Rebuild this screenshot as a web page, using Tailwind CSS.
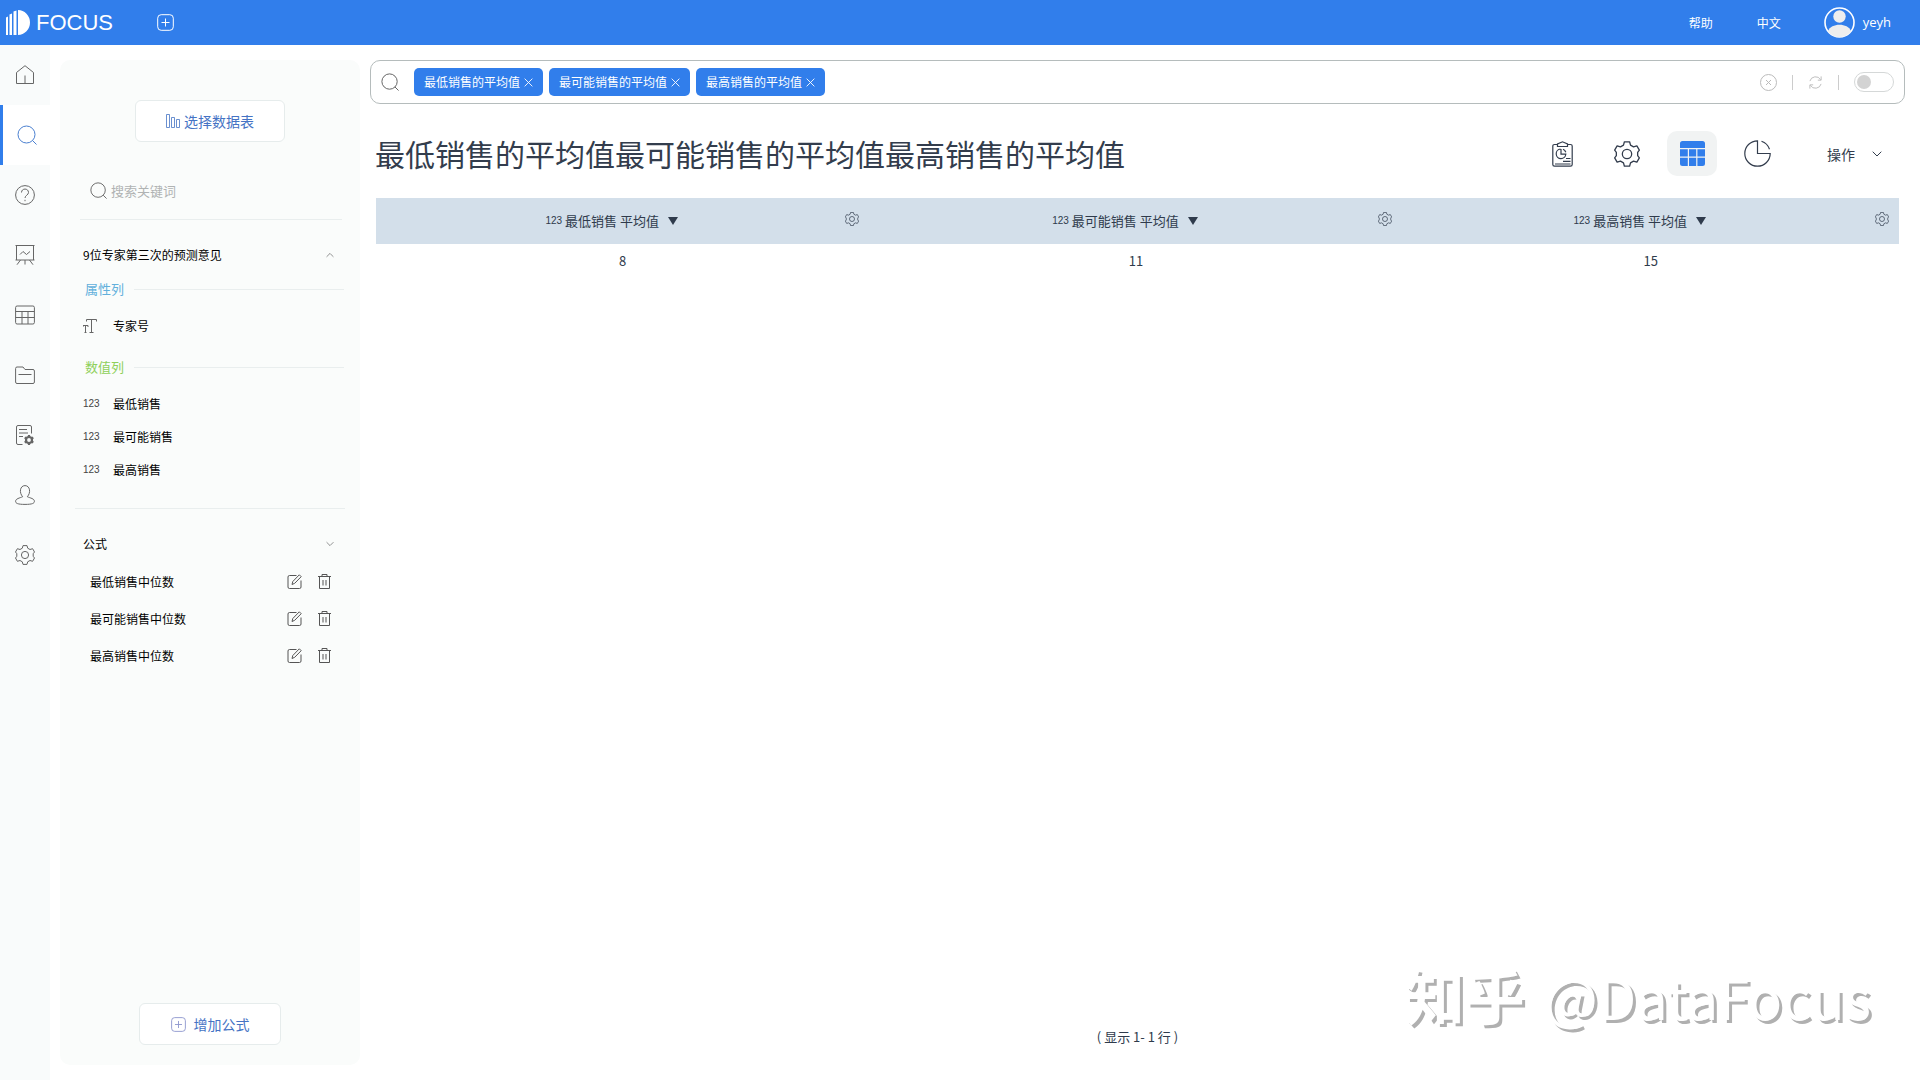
<!DOCTYPE html>
<html lang="zh-CN">
<head>
<meta charset="utf-8">
<meta name="viewport" content="width=device-width, initial-scale=1">
<title>FOCUS</title>
<script src="https://cdn.jsdelivr.net/npm/@tailwindcss/browser@4"></script>
</head>
<body class="flex min-h-screen flex-col bg-white font-['Noto_Sans_CJK_SC',sans-serif] text-xs text-black">

<!-- Shared icons -->
<svg class="hidden" aria-hidden="true">
  <symbol id="i-search" viewBox="0 0 20 20" fill="none" stroke="currentColor"><circle cx="9.500" cy="9.500" r="8.500"/><path d="M15.500 15.500l4 4"/></symbol>
  <symbol id="i-gear" viewBox="0 0 20 20" fill="none" stroke="currentColor" stroke-linejoin="round"><path d="M8 .6h4l.7 2.600 2.300 1.300 2.600-.8 1.900 3.300-1.300 1.700v2.600l1.300 1.700-1.900 3.300-2.600-.8-2.300 1.300-.7 2.600H8l-.7-2.600L5 15.500l-2.600.8L.5 13l1.300-1.700V8.700L.5 7l1.900-3.300 2.600.8 2.300-1.300z"/><circle cx="10" cy="10" r="3.600"/></symbol>
  <symbol id="i-plus" viewBox="0 0 17 17" fill="none" stroke="currentColor"><rect x=".7" y=".7" width="15.600" height="15.600" rx="3.500"/><path d="M8.500 4.500v8M4.500 8.500h8"/></symbol>
  <symbol id="i-x" viewBox="0 0 10 10" fill="none" stroke="currentColor"><path d="M.7.7l8.600 8.600M9.300.7L.7 9.300"/></symbol>
  <symbol id="i-down" viewBox="0 0 10 6" fill="none" stroke="currentColor"><path d="M.7.7L5 5 9.300.7"/></symbol>
  <symbol id="i-caret" viewBox="0 0 10 8" fill="currentColor"><path d="M0 0h10L5 8z"/></symbol>
  <symbol id="i-edit" viewBox="0 0 15 15" fill="none" stroke="currentColor"><path d="M9.500 1.500H2.500a1.500 1.500 0 0 0-1.500 1.500v10a1.500 1.500 0 0 0 1.500 1.500h10a1.500 1.500 0 0 0 1.500-1.500V6.500"/><path d="M5 10.500l.8-3L12.300.8l1.900 1.900-6.500 6.600z" stroke-linejoin="round"/></symbol>
  <symbol id="i-trash" viewBox="0 0 13 15" fill="none" stroke="currentColor"><path d="M0 2.500h13M4 2.500v-2h5v2M1.500 2.500v12h10v-12M5 6v5.500M8 6v5.500"/></symbol>
</svg>

<header class="flex h-[45px] items-center bg-[#317eeb] pr-[29px] pl-1.5 text-white">
  <a href="#" class="flex items-center gap-1.5" aria-label="FOCUS">
    <svg class="h-[25px] w-6" viewBox="0 0 24 25" fill="currentColor" aria-hidden="true"><path d="M0 7.500l2-1V25H0zM3.500 4.500l2.500-1V25H3.500zM7.500 1.500l3-1V25h-3zM12 0a12 12.500 0 0 1 0 25z"/></svg>
    <span class="font-['Liberation_Sans',sans-serif] text-[22px] leading-7">FOCUS</span>
  </a>
  <button type="button" class="ml-11" aria-label="新建"><svg class="size-[17px]"><use href="#i-plus"/></svg></button>
  <nav class="ml-auto flex items-center">
    <a href="#" class="mr-11">帮助</a>
    <a href="#" class="mr-[43px]">中文</a>
    <a href="#" class="flex items-center gap-2">
      <svg class="size-[31px]" viewBox="0 0 31 31" aria-hidden="true"><circle cx="15.500" cy="15.500" r="14.500" fill="none" stroke="#fff" stroke-width="1.600"/><circle cx="15.500" cy="9.500" r="6.200" fill="#eee"/><path d="M4 24c3-8.500 20-8.500 23 0a14 14 0 0 1-23 0z" fill="#eee"/></svg>
      <span class="font-['Open_Sans',sans-serif] text-[13px]">yeyh</span>
    </a>
  </nav>
</header>

<div class="flex grow">
  <!-- Icon rail -->
  <nav class="w-[50px] shrink-0 bg-[#f9fbfb] text-[#666]">
    <a href="#" aria-label="首页" class="flex h-15 items-center justify-center"><svg class="size-5" viewBox="0 0 20 20" fill="none" stroke="currentColor"><path d="M1.500 18.500V7.500L10 .7l8.500 6.800v11zM10 18.500v-8"/></svg></a>
    <a href="#" aria-label="搜索" class="flex h-15 items-center justify-center border-l-3 border-[#317eeb] bg-white text-[#4a7fd0]"><svg class="size-5"><use href="#i-search"/></svg></a>
    <a href="#" aria-label="帮助" class="flex h-15 items-center justify-center"><svg class="size-5" viewBox="0 0 20 20" fill="none" stroke="currentColor"><circle cx="10" cy="10" r="9.400"/><path d="M6.500 7.500c0-4.600 7-4.600 7 0 0 2.600-3.500 2.800-3.500 5.500M10 14.800v1.400"/></svg></a>
    <a href="#" aria-label="看板" class="flex h-15 items-center justify-center"><svg class="size-5" viewBox="0 0 20 20" fill="none" stroke="currentColor"><path d="M.5.5h19M1.500.5v14.500M18.500.5v14.500M.5 15h19M5.500 15L2 19.700M14.500 15l3.500 4.700M10 15v4.500M5 9.500l3-3 3.500 3L15 6.500"/></svg></a>
    <a href="#" aria-label="数据表" class="flex h-15 items-center justify-center"><svg class="size-5" viewBox="0 0 20 20" fill="none" stroke="currentColor"><rect x=".6" y="1" width="18.800" height="18" rx="1.500"/><path d="M.6 6.500h18.800M.6 12.500h18.800M7 6.500V19M13 6.500V19"/></svg></a>
    <a href="#" aria-label="文件夹" class="flex h-15 items-center justify-center"><svg class="size-5" viewBox="0 0 20 20" fill="none" stroke="currentColor"><path d="M.6 17V3.500Q.6 2 2 2h6l2 2.500h8q1.400 0 1.400 1.500v11q0 1.500-1.400 1.500H2Q.6 18.500.6 17zM3.500 9.500h13"/></svg></a>
    <a href="#" aria-label="任务" class="flex h-15 items-center justify-center"><svg class="size-5" viewBox="0 0 20 20" fill="none" stroke="currentColor"><path d="M7.500 19.500H3q-1.500 0-1.500-1.500V2Q1.500.5 3 .5h12q1.500 0 1.500 1.500v6.500M4 4.500h8M4 8h9M4 11.500h4"/><circle cx="14" cy="15" r="3" stroke-width="2.200"/><path d="M14 10v1.800M14 18.200V20M9.700 12.500l1.500.9M16.800 16.600l1.500.9M18.300 12.500l-1.500.9M11.200 16.600l-1.500.9" stroke-width="2.200"/></svg></a>
    <a href="#" aria-label="用户" class="flex h-15 items-center justify-center"><svg class="size-5" viewBox="0 0 20 20" fill="none" stroke="currentColor"><path d="M7.700 11.700C4 8 4.800.6 10 .6s6 7.400 2.300 11.100c3 1.400 7.100 1.900 7.100 4.600 0 2-2 3.100-9.400 3.100S.6 18.300.6 16.300c0-2.700 4.100-3.200 7.100-4.600z"/></svg></a>
    <a href="#" aria-label="设置" class="flex h-15 items-center justify-center"><svg class="size-5"><use href="#i-gear"/></svg></a>
  </nav>

  <!-- Data source panel -->
  <aside class="mt-[15px] mb-[15px] ml-2.5 flex w-[300px] shrink-0 flex-col rounded-[10px] bg-[#fafcfb] pt-10 pb-5">
    <button type="button" class="flex h-[42px] w-[150px] items-center justify-center gap-1 self-center rounded-md border border-[#e6ecec] bg-white text-sm text-[#4573c4]">
      <svg class="size-3.5" viewBox="0 0 14 14" fill="none" stroke="currentColor" stroke-width=".8" aria-hidden="true"><path d="M.5.5h3v13h-3zM5.500 3.500h3v10h-3zM10.500 5.500h3v8h-3z"/></svg>选择数据表
    </button>
    <label class="mt-5 mr-[18px] ml-5 flex h-[58px] items-center gap-1 border-b border-[#e9eeee] pl-2.5 text-[#555]">
      <svg class="size-[17px] shrink-0" aria-hidden="true"><use href="#i-search"/></svg>
      <input type="text" placeholder="搜索关键词" aria-label="搜索关键词" class="w-full bg-transparent text-[13px] outline-none placeholder:text-[#b0b3b3]">
    </label>

    <section class="mt-4 pr-4 pl-[23px]">
      <h2 class="flex h-[38px] items-center justify-between pr-2.5">9位专家第三次的预测意见
        <button type="button" aria-label="收起"><svg class="h-1.5 w-2 rotate-180 text-[#777]"><use href="#i-down"/></svg></button>
      </h2>
      <h3 class="flex h-[30px] items-center gap-2.5 pl-0.5 text-[13px] text-[#62b0dc]">属性列<span class="h-px grow bg-[#e9eeee]"></span></h3>
      <p class="flex h-11 items-center"><svg class="mr-4 size-3.5 text-[#666]" viewBox="0 0 14 14" fill="none" stroke="currentColor" aria-hidden="true"><path d="M3.500 2.500V.5h10v2M8.500.5v13M6.500 13.500h4M0 8V6.500h5V8M2.500 6.500v7M1.500 13.500h2"/></svg>专家号</p>
      <h3 class="flex h-[38px] items-center gap-2.5 pl-0.5 text-[13px] text-[#8fd05a]">数值列<span class="h-px grow bg-[#e9eeee]"></span></h3>
      <ul class="pt-px">
        <li class="flex h-[33px] items-center"><span class="w-[30px] font-['Liberation_Sans',sans-serif] text-[10px] text-[#444]">123</span>最低销售</li>
        <li class="flex h-[33px] items-center"><span class="w-[30px] font-['Liberation_Sans',sans-serif] text-[10px] text-[#444]">123</span>最可能销售</li>
        <li class="flex h-[33px] items-center"><span class="w-[30px] font-['Liberation_Sans',sans-serif] text-[10px] text-[#444]">123</span>最高销售</li>
      </ul>
    </section>

    <hr class="mx-[15px] mt-[22px] border-[#e9eeee]">

    <section class="mt-4 pr-[26px] pl-[23px]">
      <h2 class="flex h-[38px] items-center justify-between">公式
        <button type="button" aria-label="展开"><svg class="h-1.5 w-2 text-[#777]"><use href="#i-down"/></svg></button>
      </h2>
      <ul class="pl-[7px]">
        <li class="flex h-[37px] items-center gap-4 pr-[3px]"><span class="grow">最低销售中位数</span><button type="button" aria-label="编辑" class="text-[#555]"><svg class="size-[15px]"><use href="#i-edit"/></svg></button><button type="button" aria-label="删除" class="text-[#555]"><svg class="h-[15px] w-[13px]"><use href="#i-trash"/></svg></button></li>
        <li class="flex h-[37px] items-center gap-4 pr-[3px]"><span class="grow">最可能销售中位数</span><button type="button" aria-label="编辑" class="text-[#555]"><svg class="size-[15px]"><use href="#i-edit"/></svg></button><button type="button" aria-label="删除" class="text-[#555]"><svg class="h-[15px] w-[13px]"><use href="#i-trash"/></svg></button></li>
        <li class="flex h-[37px] items-center gap-4 pr-[3px]"><span class="grow">最高销售中位数</span><button type="button" aria-label="编辑" class="text-[#555]"><svg class="size-[15px]"><use href="#i-edit"/></svg></button><button type="button" aria-label="删除" class="text-[#555]"><svg class="h-[15px] w-[13px]"><use href="#i-trash"/></svg></button></li>
      </ul>
    </section>

    <button type="button" class="mt-auto flex h-[42px] w-[142px] items-center justify-center gap-2 self-center rounded-md border border-[#e6ecec] bg-white text-sm text-[#4573c4]">
      <svg class="size-[15px] text-[#8a93cc]" aria-hidden="true"><use href="#i-plus"/></svg>增加公式
    </button>
  </aside>

  <main class="relative mr-[15px] ml-2.5 flex min-w-0 grow flex-col pt-[15px] text-[#2f3b4c]">
    <div class="flex h-11 items-center rounded-[10px] border border-[#b5bcbc] px-2.5">
      <svg class="mr-[15px] size-[18px] shrink-0 text-[#555]" aria-hidden="true"><use href="#i-search"/></svg>
      <ul class="flex gap-1.5 text-white">
        <li class="flex h-7 items-center gap-1 rounded-[5px] bg-[#317eeb] px-2.5">最低销售的平均值<button type="button" aria-label="移除"><svg class="size-[9px]"><use href="#i-x"/></svg></button></li>
        <li class="flex h-7 items-center gap-1 rounded-[5px] bg-[#317eeb] px-2.5">最可能销售的平均值<button type="button" aria-label="移除"><svg class="size-[9px]"><use href="#i-x"/></svg></button></li>
        <li class="flex h-7 items-center gap-1 rounded-[5px] bg-[#317eeb] px-2.5">最高销售的平均值<button type="button" aria-label="移除"><svg class="size-[9px]"><use href="#i-x"/></svg></button></li>
      </ul>
      <input type="text" aria-label="搜索" class="h-full min-w-0 grow px-2 outline-none">
      <div class="flex items-center gap-[15px] text-[#bbb]">
        <button type="button" aria-label="清空"><svg class="size-[17px]" viewBox="0 0 17 17" fill="none" stroke="currentColor"><circle cx="8.500" cy="8.500" r="8"/><path d="M6 6l5 5M11 6l-5 5"/></svg></button>
        <span class="h-[15px] w-px bg-[#ccc]"></span>
        <button type="button" aria-label="刷新"><svg class="size-[15px]" viewBox="0 0 16 16" fill="none" stroke="currentColor"><path d="M2 6.500A6.300 6.300 0 0 1 13.500 5M14 9.500A6.300 6.300 0 0 1 2.500 11M14 1.500V5.500h-3.500M2 14.500v-4h3.500"/></svg></button>
        <span class="h-[15px] w-px bg-[#ccc]"></span>
        <input type="checkbox" role="switch" aria-label="切换" class="flex h-5 w-10 appearance-none items-center rounded-full border border-[#d5d8d8] bg-white px-0.5 before:size-3.5 before:rounded-full before:bg-[#d3d3d3]">
      </div>
    </div>

    <div class="mt-[27px] flex h-[45px] items-center pl-[5px] text-[#333d4d]">
      <h1 class="grow pb-0.5 text-3xl">最低销售的平均值最可能销售的平均值最高销售的平均值</h1>
      <div class="flex gap-[15px]">
        <button type="button" aria-label="报告" class="flex h-[45px] w-[50px] items-center justify-center"><svg class="h-[26px] w-[21px]" viewBox="0 0 21 26" fill="none" stroke="currentColor" stroke-width="1.200"><path d="M5 3.500H2.500Q.8 3.500.8 5v18.500q0 1.700 1.700 1.700h16q1.700 0 1.700-1.700V5q0-1.500-1.700-1.500H16"/><path d="M5.500 5.500V3L10.500.8 15.500 3v2.500zM8.500 8a4.800 4.800 0 1 0 5.300 5.200H9V8M11 8.300a5 5 0 0 1 2.800 3M14 17.500h4.500M11 20.300h7.500M3 23h15.500"/></svg></button>
        <button type="button" aria-label="配置" class="flex h-[45px] w-[50px] items-center justify-center"><svg class="size-[26px]"><use href="#i-gear"/></svg></button>
        <button type="button" aria-label="表格" class="flex h-[45px] w-[50px] items-center justify-center rounded-[10px] bg-[#f1f3f3] text-[#317eeb]"><svg class="size-[25px]" viewBox="0 0 25 25" fill="currentColor"><path d="M2.500 0h20A2.500 2.500 0 0 1 25 2.500V7H0V2.500A2.500 2.500 0 0 1 2.500 0zM0 8.200h7.800v7.200H0zM9 8.200h7.200v7.200H9zM17.400 8.200H25v7.200h-7.600zM0 16.700h7.800V25H2.500A2.500 2.500 0 0 1 0 22.500zM9 16.700h7.200V25H9zM17.400 16.700H25v5.800a2.500 2.500 0 0 1-2.500 2.500h-5.100z"/></svg></button>
        <button type="button" aria-label="图表" class="flex h-[45px] w-[50px] items-center justify-center"><svg class="size-[27px]" viewBox="0 0 27 27" fill="none" stroke="currentColor" stroke-width="1.200"><path d="M13.500.8a12.700 12.700 0 1 0 12.700 12.700H13.500zM17.500 1.300a12.700 12.700 0 0 1 8 8"/></svg></button>
      </div>
      <button type="button" class="mr-[23px] ml-[45px] flex items-center gap-[17px] text-sm">操作<svg class="h-1.5 w-[10px]" aria-hidden="true"><use href="#i-down"/></svg></button>
    </div>

    <div class="mt-[22px] grow pr-1.5 pl-1.5">
      <table class="w-full table-fixed text-[13px]">
        <colgroup><col class="w-[32.4%]"><col class="w-[35%]"><col></colgroup>
        <thead>
          <tr class="bg-[#d3dfea]">
            <th class="h-[46px] p-0 font-normal">
              <div class="flex items-center pr-2.5 pl-[2px]"><span class="flex grow items-center justify-center"><span class="mr-[3px] font-['Liberation_Sans',sans-serif] text-[10px]">123</span>最低销售 平均值<svg class="ml-[9px] h-2 w-2.5" aria-hidden="true"><use href="#i-caret"/></svg></span><button type="button" aria-label="列设置" class="pb-1"><svg class="size-3.5"><use href="#i-gear"/></svg></button></div>
            </th>
            <th class="h-[46px] p-0 font-normal">
              <div class="flex items-center pr-2.5 pl-[2px]"><span class="flex grow items-center justify-center"><span class="mr-[3px] font-['Liberation_Sans',sans-serif] text-[10px]">123</span>最可能销售 平均值<svg class="ml-[9px] h-2 w-2.5" aria-hidden="true"><use href="#i-caret"/></svg></span><button type="button" aria-label="列设置" class="pb-1"><svg class="size-3.5"><use href="#i-gear"/></svg></button></div>
            </th>
            <th class="h-[46px] p-0 font-normal">
              <div class="flex items-center pr-2.5 pl-[2px]"><span class="flex grow items-center justify-center"><span class="mr-[3px] font-['Liberation_Sans',sans-serif] text-[10px]">123</span>最高销售 平均值<svg class="ml-[9px] h-2 w-2.5" aria-hidden="true"><use href="#i-caret"/></svg></span><button type="button" aria-label="列设置" class="pb-1"><svg class="size-3.5"><use href="#i-gear"/></svg></button></div>
            </th>
          </tr>
        </thead>
        <tbody>
          <tr class="text-center"><td class="h-[34px] p-0">8</td><td class="h-[34px] p-0">11</td><td class="h-[34px] p-0">15</td></tr>
        </tbody>
      </table>
    </div>
    <p class="pb-[33px] text-center text-[13px] leading-5">( 显示 1- 1 行 )</p>

    <!-- Watermark -->
    <p class="pointer-events-none absolute right-[34px] bottom-11 flex items-baseline gap-5 text-[56px] leading-[80px] whitespace-nowrap text-white [text-shadow:3px_3px_0_#b0b0b0]"><span class="text-[60px] font-bold">知乎</span><span>@DataFocus</span></p>
  </main>
</div>
</body>
</html>
